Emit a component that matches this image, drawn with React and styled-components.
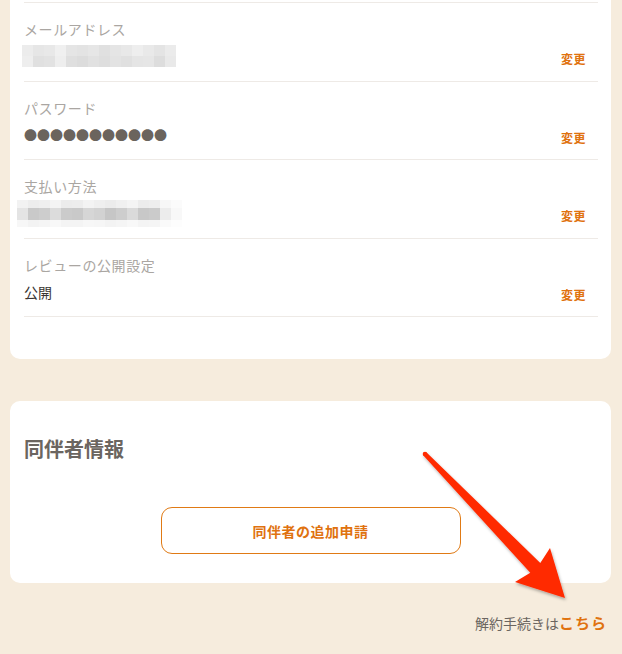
import React from 'react';
import styled, { createGlobalStyle } from 'styled-components';

const GlobalStyle = createGlobalStyle`
  html, body {
    margin: 0;
    padding: 0;
    overflow: hidden;
    background: #f6ecdd;
  }
  body {
    font-family: "Noto Sans CJK JP", "Noto Sans", sans-serif;
    -webkit-font-smoothing: antialiased;
  }
`;

const Page = styled.div`
  position: relative;
  width: 622px;
  height: 654px;
  overflow: hidden;
  background: #f6ecdd;
`;

const Card = styled.section`
  background: #fff;
  border-radius: 10px;
  margin: ${({ $first }) => ($first ? '-20px 11px 0 10px' : '42px 11px 0 10px')};
  padding: ${({ $first }) => ($first ? '22px 13px 42px 14px' : '34px 14px 29px 14px')};
`;

const Row = styled.div`
  display: flex;
  align-items: flex-end;
  justify-content: space-between;
  border-top: 1px solid #eeeae6;
  padding: 16px 12px 14.5px 0;
  &:last-child {
    border-bottom: 1px solid #eeeae6;
  }
`;

const RowMain = styled.div`
  display: flex;
  flex-direction: column;
  gap: 7px;
`;

const Label = styled.div`
  font-size: 14px;
  line-height: 20px;
  letter-spacing: 0.6px;
  color: #aaa6a2;
`;

const Value = styled.div`
  font-size: 14px;
  line-height: 20px;
  height: 20px;
  color: #3a3532;
  display: flex;
  align-items: center;
`;

const Dots = styled.span`
  font-size: 13px;
  color: #6b645d;
`;

const Mosaic = styled.svg`
  display: block;
  margin-left: ${({ $shift }) => $shift}px;
  flex-shrink: 0;
`;

const ChangeLink = styled.a`
  font-size: 12px;
  line-height: 18px;
  font-weight: 700;
  letter-spacing: 0.5px;
  color: #e0720f;
  text-decoration: none;
  margin-bottom: -2px;
`;

const Heading = styled.h2`
  margin: 0;
  font-size: 20px;
  line-height: 28px;
  font-weight: 700;
  color: #6b6560;
`;

const ButtonWrap = styled.div`
  display: flex;
  justify-content: center;
  margin-top: 44px;
`;

const OutlineButton = styled.button`
  width: 300px;
  height: 47px;
  border: 1px solid #e07a15;
  border-radius: 11px;
  background: #fff;
  color: #e0720f;
  font-family: inherit;
  font-size: 14px;
  font-weight: 700;
  letter-spacing: 0.5px;
`;

const Footer = styled.p`
  margin: 30px 15px 0 0;
  text-align: right;
  font-size: 14px;
  line-height: 20px;
  color: #6b6560;
`;

const FooterLink = styled.a`
  font-size: 15px;
  font-weight: 700;
  letter-spacing: 1px;
  color: #e0720f;
  text-decoration: none;
`;

const Overlay = styled.svg`
  position: absolute;
  left: 0;
  top: 0;
  pointer-events: none;
`;

const emailCells = [
  ['#ececec', '#e6e6e6', '#e8e8e8', '#f0f0f0', '#e5e5e5', '#e3e3e3', '#e6e6e6', '#e0e0e0', '#e5e5e5', '#e8e8e8', '#eeeeee', '#e9e9e9', '#e4e4e4', '#ebebeb'],
  ['#eeeeee', '#e0e0e0', '#e2e2e2', '#eeeeee', '#dfdfdf', '#dcdcdc', '#e1e1e1', '#dedede', '#e3e3e3', '#e0e0e0', '#e5e5e5', '#e6e6e6', '#dddddd', '#e9e9e9'],
];

const payCells = [
  ['#f2f2f2', '#ededed', '#efefef', '#f4f4f4', '#ececec', '#ededed', '#f3f3f3', '#efefef', '#ececec', '#f0f0f0', '#f4f4f4', '#ececec', '#eeeeee', '#f7f7f7', '#fbfbfb'],
  ['#e4e4e4', '#c9c9c9', '#cdcdcd', '#dcdcdc', '#cbcbcb', '#c9c9c9', '#d6d6d6', '#d2d2d2', '#c6c6c6', '#cdcdcd', '#dadada', '#c8c8c8', '#cbcbcb', '#ececec', '#f8f8f8'],
  ['#f7f7f7', '#f3f3f3', '#f5f5f5', '#f8f8f8', '#f4f4f4', '#f4f4f4', '#f7f7f7', '#f6f6f6', '#f3f3f3', '#f5f5f5', '#f8f8f8', '#f4f4f4', '#f5f5f5', '#fafafa', '#fdfdfd'],
];

function MosaicBlock({ cells, rowHeights, cellWidth, shift }) {
  const width = cells[0].length * cellWidth;
  const height = rowHeights.reduce((a, b) => a + b, 0);
  let y = 0;
  return (
    <Mosaic $shift={shift} width={width} height={height} viewBox={`0 0 ${width} ${height}`}>
      {cells.map((row, r) => {
        const top = y;
        y += rowHeights[r];
        return row.map((c, i) => (
          <rect key={`${r}-${i}`} x={i * cellWidth} y={top} width={cellWidth} height={rowHeights[r]} fill={c} />
        ));
      })}
    </Mosaic>
  );
}

const rows = [
  {
    label: 'メールアドレス',
    value: <MosaicBlock cells={emailCells} rowHeights={[11, 11]} cellWidth={11} shift={-2} />,
  },
  { label: 'パスワード', value: <Dots>●●●●●●●●●●●</Dots> },
  {
    label: '支払い方法',
    value: <MosaicBlock cells={payCells} rowHeights={[8, 12, 7]} cellWidth={11} shift={-7} />,
  },
  { label: 'レビューの公開設定', value: '公開' },
];

function Arrow() {
  return (
    <Overlay width="622" height="654" viewBox="0 0 622 654">
      <defs>
        <filter id="arrowShadow" x="-20%" y="-20%" width="140%" height="140%">
          <feDropShadow dx="1" dy="2" stdDeviation="1.5" floodColor="#000" floodOpacity="0.3" />
        </filter>
      </defs>
      <g fill="#ff2a00" filter="url(#arrowShadow)">
        <polygon points="426.6,452.4 540.3,563 550,548 565,598 515,582 530.3,572.8 423.4,455.6" />
        <circle cx="425" cy="454" r="2.3" />
      </g>
    </Overlay>
  );
}

export default function App() {
  return (
    <>
      <GlobalStyle />
      <Page>
        <Card $first>
          {rows.map((r) => (
            <Row key={r.label}>
              <RowMain>
                <Label>{r.label}</Label>
                <Value>{r.value}</Value>
              </RowMain>
              <ChangeLink href="#">変更</ChangeLink>
            </Row>
          ))}
        </Card>

        <Card>
          <Heading>同伴者情報</Heading>
          <ButtonWrap>
            <OutlineButton>同伴者の追加申請</OutlineButton>
          </ButtonWrap>
        </Card>

        <Footer>
          解約手続きは<FooterLink href="#">こちら</FooterLink>
        </Footer>

        <Arrow />
      </Page>
    </>
  );
}
